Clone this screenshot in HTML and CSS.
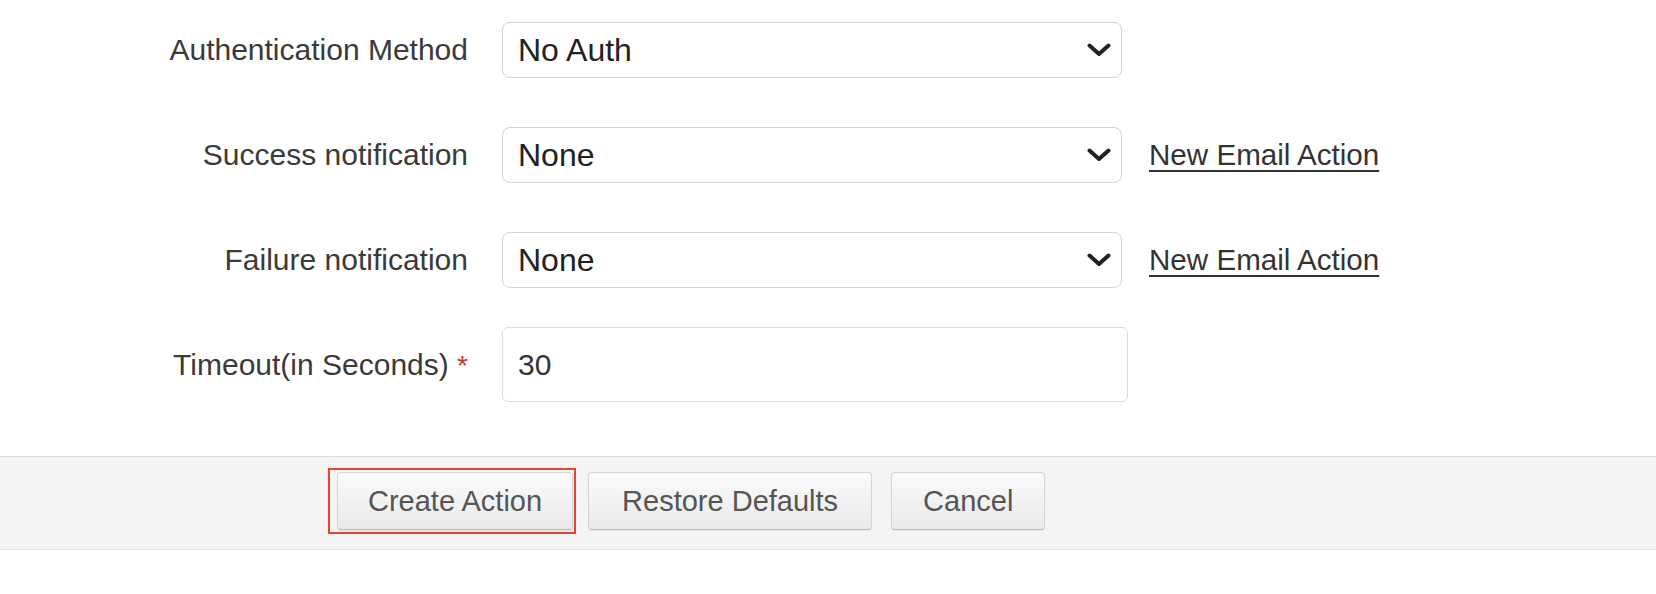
FILE: index.html
```html
<!DOCTYPE html>
<html lang="en">
<head>
<meta charset="utf-8">
<title>Create Action</title>
<link rel="stylesheet" href="styles.css">
</head>
<body>
<div class="form">
  <div class="row">
    <label class="label">Authentication Method</label>
    <div class="select">
      <span>No Auth</span>
      <svg class="chev" width="24" height="14" viewBox="0 0 24 14"><path d="M2.5 2.5 L12 11 L21.5 2.5" fill="none" stroke="#222" stroke-width="4" stroke-linecap="round" stroke-linejoin="round"/></svg>
    </div>
  </div>
  <div class="row">
    <label class="label">Success notification</label>
    <div class="select">
      <span>None</span>
      <svg class="chev" width="24" height="14" viewBox="0 0 24 14"><path d="M2.5 2.5 L12 11 L21.5 2.5" fill="none" stroke="#222" stroke-width="4" stroke-linecap="round" stroke-linejoin="round"/></svg>
    </div>
    <a class="link" href="#">New Email Action</a>
  </div>
  <div class="row">
    <label class="label">Failure notification</label>
    <div class="select">
      <span>None</span>
      <svg class="chev" width="24" height="14" viewBox="0 0 24 14"><path d="M2.5 2.5 L12 11 L21.5 2.5" fill="none" stroke="#222" stroke-width="4" stroke-linecap="round" stroke-linejoin="round"/></svg>
    </div>
    <a class="link" href="#">New Email Action</a>
  </div>
  <div class="row row-input">
    <label class="label">Timeout(in Seconds) <span class="req">*</span></label>
    <div class="input">30</div>
  </div>
</div>
<div class="footer">
  <span class="highlight"><button class="btn">Create Action</button></span>
  <button class="btn btn-restore">Restore Defaults</button>
  <button class="btn btn-cancel">Cancel</button>
</div>
</body>
</html>
```
FILE: styles.css
```css
html, body {
  margin: 0;
  padding: 0;
  background: #ffffff;
  font-family: "Liberation Sans", Arial, sans-serif;
}

.form {
  padding-top: 22px;
  padding-bottom: 54px;
}

.row {
  display: flex;
  align-items: center;
  margin-bottom: 49px;
}

.row-input {
  margin-top: -10px;
  margin-bottom: 0;
}

.label {
  width: 468px;
  flex: none;
  text-align: right;
  font-size: 30px;
  color: #3a3a3a;
  margin-right: 34px;
}

.req {
  color: #c0392b;
  font-size: 28px;
}

.select {
  box-sizing: border-box;
  width: 620px;
  height: 56px;
  border: 1.5px solid #d2d2d2;
  border-radius: 8px;
  display: flex;
  align-items: center;
  justify-content: space-between;
  padding: 0 10px 0 15px;
  font-size: 32px;
  color: #222;
  background: #fff;
}

.chev {
  display: block;
}

.link {
  margin-left: 27px;
  font-size: 29.6px;
  color: #333;
  text-decoration: underline;
  text-decoration-thickness: 2px;
  text-underline-offset: 5px;
}

.input {
  box-sizing: border-box;
  width: 626px;
  height: 75px;
  border: 1px solid #dcdcdc;
  border-radius: 6px;
  display: flex;
  align-items: center;
  padding-left: 15px;
  font-size: 30px;
  color: #333;
}

.footer {
  display: flex;
  align-items: center;
  background: #f4f4f4;
  border-top: 1px solid #dedede;
  border-bottom: 1px solid #e2e2e2;
  padding: 11px 0 15px 328px;
}

.highlight {
  display: inline-flex;
  border: 2px solid #e8432f;
  padding: 2px 1px 2px 7px;
}

.btn {
  height: 58px;
  padding: 0 30px;
  font-family: "Liberation Sans", Arial, sans-serif;
  font-size: 29px;
  color: #555;
  background: linear-gradient(#fbfbfb, #e9e9e9);
  border: 1px solid #d4d4d4;
  border-bottom-color: #bdbdbd;
  border-radius: 4px;
  box-shadow: 0 1px 1px rgba(0,0,0,0.08);
}

.btn-restore {
  margin-left: 12px;
  padding: 0 33px;
}

.btn-cancel {
  margin-left: 19px;
  padding: 0 31px;
}
```
